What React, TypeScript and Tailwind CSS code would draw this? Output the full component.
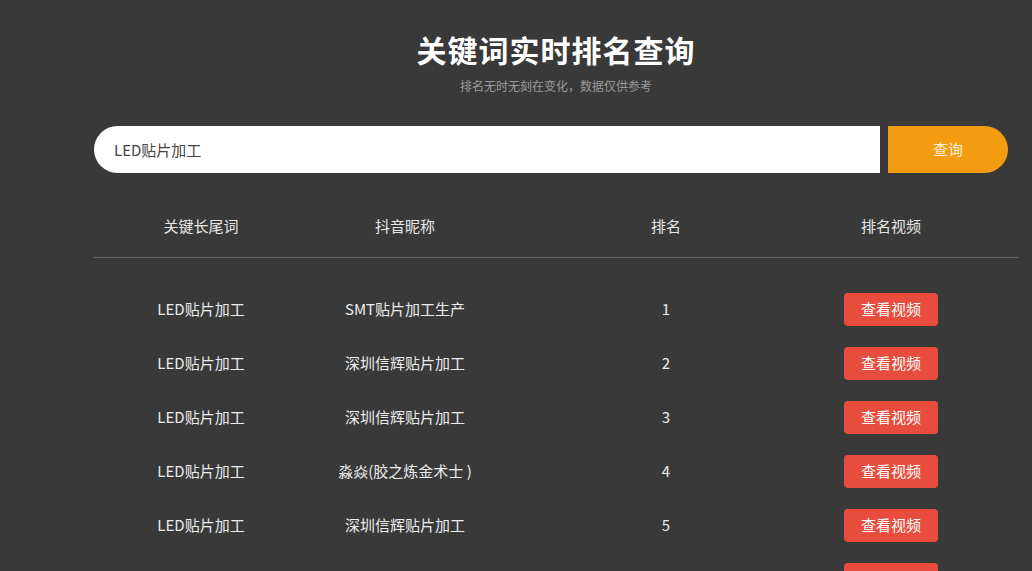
const rows = [
    { keyword: "LED贴片加工", nick: "SMT贴片加工生产", rank: 1 },
    { keyword: "LED贴片加工", nick: "深圳信辉贴片加工", rank: 2 },
    { keyword: "LED贴片加工", nick: "深圳信辉贴片加工", rank: 3 },
    { keyword: "LED贴片加工", nick: "淼焱(胶之炼金术士 )", rank: 4 },
    { keyword: "LED贴片加工", nick: "深圳信辉贴片加工", rank: 5 },
    { keyword: "LED贴片加工", nick: "深圳信辉贴片加工", rank: 6 },
];

const cols = "grid grid-cols-[214px_194px_328px_122px]";

const App = () => {
    return (
        <main
            className="w-full min-h-screen h-[571px] overflow-hidden bg-[#393939] text-white"
            style={{ fontFamily: '"Noto Sans CJK SC", "Noto Sans", sans-serif' }}
        >
            <div className="ml-[94px] w-[924px] pt-[27px]">
                <h1 className="text-center text-[30px] leading-[44px] font-bold tracking-[1px] text-white">
                    关键词实时排名查询
                </h1>
                <p className="mt-[5px] text-center text-[12px] leading-[20px] text-[#9a9a9a]">
                    排名无时无刻在变化，数据仅供参考
                </p>

                {/* search */}
                <div className="mt-[30px] flex gap-2 items-center">
                    <input
                        type="text"
                        defaultValue="LED贴片加工"
                        className="w-[786px] h-[47px] bg-white rounded-l-full rounded-r-[3px] pl-[20px] text-[15px] text-[#444] outline-none"
                    />
                    <button className="w-[120px] h-[47px] bg-[#f39c12] rounded-r-full rounded-l-[3px] text-[15px] text-[#fdf0dc]">
                        查询
                    </button>
                </div>

                {/* table */}
                <div className={`${cols} mt-[43px] pb-[21px] border-b border-[#6a6a6a] text-[15px] leading-[20px] text-[#e6e6e6]`}>
                    <div className="text-center">关键长尾词</div>
                    <div className="text-center">抖音昵称</div>
                    <div className="text-center">排名</div>
                    <div className="text-center">排名视频</div>
                </div>
                <div className="pt-[24px]">
                    {rows.map((r, i) => (
                        <div key={i} className={`${cols} h-[54px] items-center text-[15px] text-[#ececec]`}>
                            <div className="text-center">{r.keyword}</div>
                            <div className="text-center">{r.nick}</div>
                            <div className="text-center">{r.rank}</div>
                            <div className="flex justify-center">
                                <button className="w-[94px] h-[33px] rounded-[4px] bg-[#e74c3c] text-[15px] text-white">
                                    查看视频
                                </button>
                            </div>
                        </div>
                    ))}
                </div>
            </div>
        </main>
    );
};

export default App;
